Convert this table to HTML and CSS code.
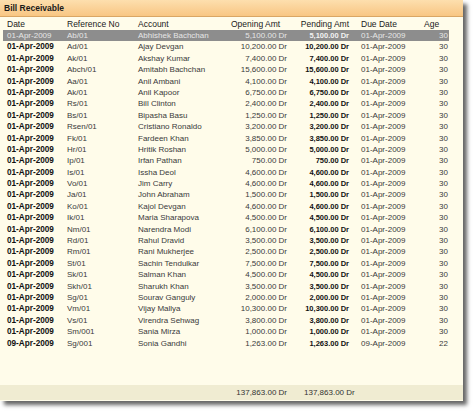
FILE: index.html
```html
<!DOCTYPE html>
<html>
<head>
<meta charset="utf-8">
<link rel="stylesheet" href="styles.css">
</head>
<body>
<div class="panel">
  <div class="title">Bill Receivable</div>
  <div class="grid head">
    <span>Date</span><span>Reference No</span><span>Account</span><span>Opening Amt</span><span class="r">Pending Amt</span><span class="due">Due Date</span><span>Age</span>
  </div>
  <div class="list" id="list"></div>
  <div class="grid foot">
    <span></span><span></span><span></span><span class="r">137,863.00 Dr</span><span class="tot2">137,863.00 Dr</span><span></span><span></span>
  </div>
</div>
<script src="app.js"></script>
</body>
</html>
```
FILE: app.js
```js
const rows = [
["01-Apr-2009","Ab/01","Abhishek Bachchan","5,100.00"],
["01-Apr-2009","Ad/01","Ajay Devgan","10,200.00"],
["01-Apr-2009","Ak/01","Akshay Kumar","7,400.00"],
["01-Apr-2009","Abch/01","Amitabh Bachchan","15,600.00"],
["01-Apr-2009","Aa/01","Anil Ambani","4,100.00"],
["01-Apr-2009","Ak/01","Anil Kapoor","6,750.00"],
["01-Apr-2009","Rs/01","Bill Clinton","2,400.00"],
["01-Apr-2009","Bs/01","Bipasha Basu","1,250.00"],
["01-Apr-2009","Rsen/01","Cristiano Ronaldo","3,200.00"],
["01-Apr-2009","Fk/01","Fardeen Khan","3,850.00"],
["01-Apr-2009","Hr/01","Hritik Roshan","5,000.00"],
["01-Apr-2009","Ip/01","Irfan Pathan","750.00"],
["01-Apr-2009","Is/01","Issha Deol","4,600.00"],
["01-Apr-2009","Vo/01","Jim Carry","4,600.00"],
["01-Apr-2009","Ja/01","John Abraham","1,500.00"],
["01-Apr-2009","Ko/01","Kajol Devgan","4,600.00"],
["01-Apr-2009","Ik/01","Maria Sharapova","4,500.00"],
["01-Apr-2009","Nm/01","Narendra Modi","6,100.00"],
["01-Apr-2009","Rd/01","Rahul Dravid","3,500.00"],
["01-Apr-2009","Rm/01","Rani Mukherjee","2,500.00"],
["01-Apr-2009","St/01","Sachin Tendulkar","7,500.00"],
["01-Apr-2009","Sk/01","Salman Khan","4,500.00"],
["01-Apr-2009","Skh/01","Sharukh Khan","3,500.00"],
["01-Apr-2009","Sg/01","Sourav Ganguly","2,000.00"],
["01-Apr-2009","Vm/01","Vijay Mallya","10,300.00"],
["01-Apr-2009","Vs/01","Virendra Sehwag","3,800.00"],
["01-Apr-2009","Sm/001","Sania Mirza","1,000.00"],
["09-Apr-2009","Sg/001","Sonia Gandhi","1,263.00","22"]
];
const list = document.getElementById('list');
rows.forEach((r, i) => {
  const d = document.createElement('div');
  d.className = 'grid row' + (i === 0 ? ' sel' : '');
  const age = r[4] || '30';
  d.innerHTML =
    '<span class="date">' + r[0] + '</span>' +
    '<span>' + r[1] + '</span>' +
    '<span>' + r[2] + '</span>' +
    '<span class="r">' + r[3] + ' Dr</span>' +
    '<span class="r pend">' + r[3] + ' Dr</span>' +
    '<span class="due">' + r[0] + '</span>' +
    '<span class="r">' + age + '</span>';
  list.appendChild(d);
});
```
FILE: styles.css
```css
html, body {
  margin: 0;
  padding: 0;
  background: #ffffff;
}
body {
  width: 474px;
  height: 412px;
  overflow: hidden;
  font-family: "Liberation Sans", Arial, sans-serif;
}
.panel {
  width: 463px;
  height: 401px;
  background: #fffcea;
  display: flex;
  flex-direction: column;
  box-shadow: 4px 4px 4px rgba(0, 0, 0, 0.6);
}
.title {
  height: 16px;
  line-height: 17px;
  border-bottom: 1px solid #d9a664;
  background: linear-gradient(#fddfae, #f8c683);
  font-weight: bold;
  font-size: 8.5px;
  color: #1a1a1a;
  padding-left: 4px;
}
.grid {
  display: grid;
  grid-template-columns: 60px 71px 93px 56px 62px 75px 24px;
  margin-left: 3px;
  width: 442px;
  padding-left: 4px;
  white-space: nowrap;
}
.head {
  height: 13px;
  line-height: 15px;
  font-size: 8.5px;
  color: #1a1a1a;
}
.list {
  flex: 1;
}
.row {
  height: 11.4px;
  line-height: 11.4px;
  font-size: 8px;
  color: #3a3a3a;
}
.r {
  text-align: right;
}
.due {
  padding-left: 12px;
}
.date {
  font-weight: bold;
  font-size: 8.2px;
  color: #111;
}
.pend {
  font-weight: bold;
  font-size: 7.5px;
  color: #111;
}
.sel {
  background: #8d8d8d;
  color: #e6e6e6;
}
.sel .date {
  font-weight: normal;
  font-size: 8px;
  color: #e6e6e6;
}
.sel .pend {
  color: #f2f2f2;
}
.foot {
  margin-left: 0;
  padding-left: 7px;
  width: 456px;
  height: 15px;
  line-height: 15px;
  font-size: 8px;
  color: #333;
  background: #f0ecd2;
  margin-bottom: 1px;
}
.tot2 {
  padding-left: 17px;
}
```
